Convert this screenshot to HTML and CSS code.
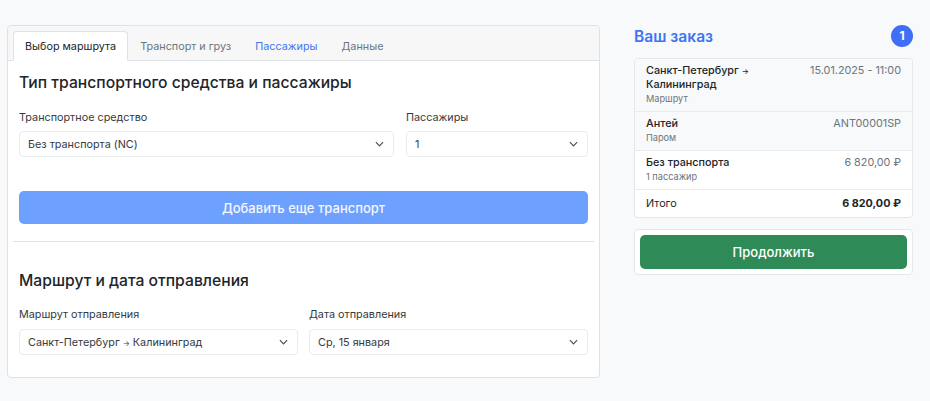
FILE: index.html
```html
<!DOCTYPE html>
<html>
<head>
<meta name="viewport" content="width=device-width, initial-scale=1">
<link rel="stylesheet" href="styles.css">
</head>
<body>

<div class="page">
  <div class="card">
    <div class="tabs">
      <a class="tab active">Выбор маршрута</a>
      <a class="tab">Транспорт и груз</a>
      <a class="tab link">Пассажиры</a>
      <a class="tab">Данные</a>
    </div>
    <div class="card-body">
      <div class="section">
        <h2>Тип транспортного средства и пассажиры</h2>
        <div class="row row-vehicle">
          <div class="field">
            <label>Транспортное средство</label>
            <div class="select">Без транспорта (NC)
              <svg viewBox="0 0 10 6"><path d="M1 1l4 4 4-4"/></svg>
            </div>
          </div>
          <div class="field">
            <label>Пассажиры</label>
            <div class="select">1
              <svg viewBox="0 0 10 6"><path d="M1 1l4 4 4-4"/></svg>
            </div>
          </div>
        </div>
        <button class="btn-add">Добавить еще транспорт</button>
      </div>
      <hr>
      <div class="section section-route">
        <h2>Маршрут и дата отправления</h2>
        <div class="row row-route">
          <div class="field">
            <label>Маршрут отправления</label>
            <div class="select"><span>Санкт-Петербург <span class="arrow">→</span> Калининград</span>
              <svg viewBox="0 0 10 6"><path d="M1 1l4 4 4-4"/></svg>
            </div>
          </div>
          <div class="field">
            <label>Дата отправления</label>
            <div class="select">Ср, 15 января
              <svg viewBox="0 0 10 6"><path d="M1 1l4 4 4-4"/></svg>
            </div>
          </div>
        </div>
      </div>
    </div>
  </div>

  <div class="order">
    <div class="order-head">
      <h3>Ваш заказ</h3>
      <span class="badge">1</span>
    </div>
    <div class="list">
      <div class="item gray">
        <div class="item-left">
          <div class="name">Санкт-Петербург <span class="arrow">→</span> Калининград</div>
          <div class="sub">Маршрут</div>
        </div>
        <div class="value">15.01.2025 - 11:00</div>
      </div>
      <div class="item gray">
        <div class="item-left">
          <div class="name">Антей</div>
          <div class="sub">Паром</div>
        </div>
        <div class="value">ANT00001SP</div>
      </div>
      <div class="item">
        <div class="item-left">
          <div class="name">Без транспорта</div>
          <div class="sub">1 пассажир</div>
        </div>
        <div class="value">6 820,00 ₽</div>
      </div>
      <div class="item total">
        <div>Итого</div>
        <strong>6 820,00 ₽</strong>
      </div>
    </div>
    <div class="continue">
      <button class="btn-continue">Продолжить</button>
    </div>
  </div>
</div>

</body>
</html>
```

FILE: styles.css
```css
* {
  box-sizing: border-box;
}

body {
  margin: 0;
  font-family: Inter, "Noto Sans", sans-serif;
  font-size: 10.8px;
  color: #212529;
  background: #f8f9fb;
}

.page {
  display: grid;
  grid-template-columns: 593px 279px;
  gap: 34px;
  align-items: start;
  padding: 25px 0 0 7px;
}

/* Left card */
.card {
  height: 353px;
  background: white;
  border: 1px solid #dee2e6;
  border-radius: 4px;
}

.tabs {
  display: flex;
  height: 35px;
  padding: 5px 5px 0;
  background: #f7f7f7;
  border-bottom: 1px solid #dee2e6;
  border-radius: 4px 4px 0 0;
}

.tab {
  height: 30px;
  padding: 0 11px;
  line-height: 29px;
  color: #6c757d;
  border: 1px solid transparent;
}

.tab.active {
  color: #212529;
  background: white;
  border-color: #dee2e6 #dee2e6 white;
  border-radius: 4px 4px 0 0;
}

.tab.link {
  color: #3f74f6;
}

.arrow {
  font-size: 7.5px;
}

.card-body {
  padding: 0 5px;
}

.section {
  padding: 0 6px;
}

h2 {
  margin: 0;
  font-size: 15.7px;
  font-weight: 500;
  line-height: 21px;
}

.section h2 {
  padding-top: 11px;
}

.row {
  display: grid;
  gap: 12px;
  margin-top: 17px;
}

.row-vehicle {
  grid-template-columns: 375px 182px;
}

.row-route {
  grid-template-columns: 279px 279px;
  gap: 11px;
  margin-top: 16px;
}

label {
  display: block;
  height: 21px;
  line-height: 15px;
  color: #343a40;
}

.row-route label {
  height: 22px;
}

.select {
  display: flex;
  justify-content: space-between;
  align-items: center;
  height: 26px;
  padding: 0 9px 0 8px;
  background: white;
  border: 1px solid #e9ecef;
  border-radius: 4px;
  color: #343a40;
}

.select svg {
  width: 9px;
  height: 6px;
  fill: none;
  stroke: #495057;
  stroke-width: 1.3;
}

.btn-add {
  display: block;
  width: 100%;
  height: 33px;
  margin-top: 34px;
  border: 0;
  border-radius: 5px;
  background: #6ea0ff;
  color: #f4f7ff;
  font: 500 13px Inter, sans-serif;
}

hr {
  margin: 17px 0 0;
  border: 0;
  border-top: 1px solid #dee2e6;
}

.section-route h2 {
  padding-top: 28px;
}

/* Order column */
.order-head {
  display: flex;
  justify-content: space-between;
  align-items: center;
  height: 22px;
}

h3 {
  margin: 0;
  font-size: 15.6px;
  font-weight: 600;
  color: #3f74f6;
}

.badge {
  width: 22px;
  height: 22px;
  line-height: 22px;
  text-align: center;
  border-radius: 50%;
  background: #3f6ff5;
  color: white;
  font-size: 12px;
  font-weight: 700;
}

.list {
  margin-top: 11px;
  background: white;
  border: 1px solid #e4e7eb;
  border-radius: 4px;
  overflow: hidden;
}

.item {
  display: flex;
  justify-content: space-between;
  padding: 5px 11px 6px;
  border-bottom: 1px solid #e9ecef;
}

.item.gray {
  background: #f8f9fa;
}

.item-left {
  max-width: 125px;
}

.name {
  font-weight: 500;
  line-height: 13px;
}

.sub {
  margin-top: 1px;
  font-size: 9.2px;
  line-height: 13px;
  color: #6c757d;
}

.value {
  color: #6c757d;
  line-height: 13px;
}

.total {
  height: 27px;
  align-items: center;
  padding: 0 11px;
  border-bottom: 0;
}

.continue {
  margin-top: 11px;
  padding: 5px;
  background: white;
  border: 1px solid #e4e7eb;
  border-radius: 4px;
}

.btn-continue {
  display: block;
  width: 100%;
  height: 34px;
  border: 0;
  border-radius: 5px;
  background: #2e8b57;
  color: white;
  font: 500 13px Inter, sans-serif;
}
```
